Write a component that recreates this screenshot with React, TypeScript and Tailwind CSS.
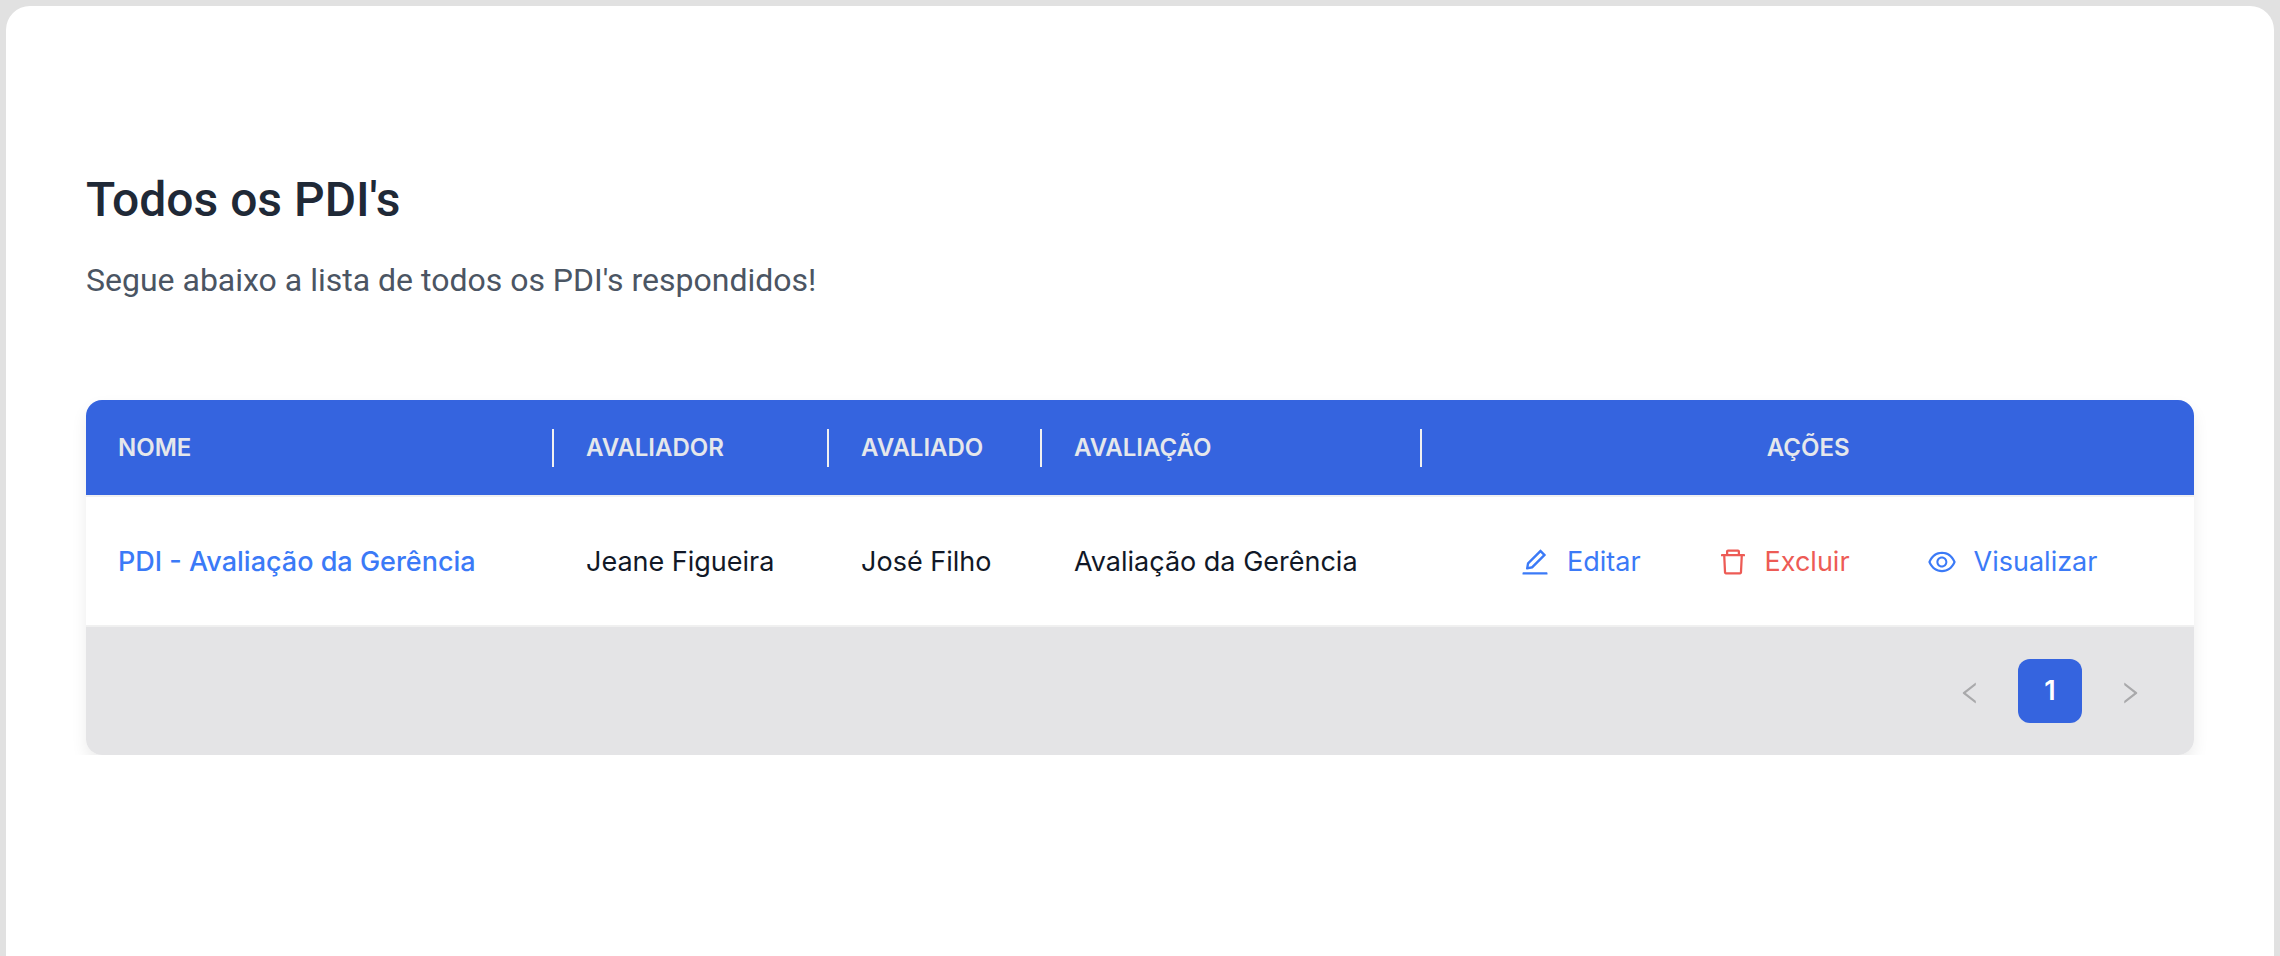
import { AiOutlineDelete, AiOutlineEdit, AiOutlineEye, AiOutlineLeft, AiOutlineRight } from 'react-icons/ai';

type Pdi = {
  id: number;
  nome: string;
  avaliador: string;
  avaliado: string;
  avaliacao: string;
};

const pdis: Pdi[] = [
  {
    id: 1,
    nome: 'PDI - Avaliação da Gerência',
    avaliador: 'Jeane Figueira',
    avaliado: 'José Filho',
    avaliacao: 'Avaliação da Gerência',
  },
];

const columns = [
  { title: 'Nome', width: 'w-[22.2%]' },
  { title: 'Avaliador', width: 'w-[13.05%]' },
  { title: 'Avaliado', width: 'w-[10.1%]' },
  { title: 'Avaliação', width: 'w-[18.05%]' },
];

const actions = [
  { label: 'Editar', icon: AiOutlineEdit, color: 'text-[#3b7af7]' },
  { label: 'Excluir', icon: AiOutlineDelete, color: 'text-[#ed5b55]' },
  { label: 'Visualizar', icon: AiOutlineEye, color: 'text-[#3b7af7]' },
];

const PdiTable = () => (
  <table className="w-full table-fixed text-left">
    <thead>
      <tr className="h-24 border-b-2 border-[#f0f0f0] bg-[#3564df] text-2xl uppercase text-[#e5e7eb]">
        {columns.map((col) => (
          <th key={col.title} className={`p-0 font-semibold ${col.width}`}>
            <div className="flex h-[38px] items-center border-r-2 border-[#f0f0f0] pl-8">{col.title}</div>
          </th>
        ))}
        <th className="p-0 text-center font-semibold">Ações</th>
      </tr>
    </thead>
    <tbody>
      {pdis.map((pdi) => (
        <tr key={pdi.id} className="h-[130px] border-b-2 border-[#f0f0f0] text-[27px] text-[#111827]">
          <td className="whitespace-nowrap pl-8 pt-0.5">
            <a href="#pdi" className="font-medium text-[#3b7af7]">{pdi.nome}</a>
          </td>
          <td className="whitespace-nowrap pl-8 pt-0.5">{pdi.avaliador}</td>
          <td className="whitespace-nowrap pl-8 pt-0.5">{pdi.avaliado}</td>
          <td className="whitespace-nowrap pl-8 pt-0.5">{pdi.avaliacao}</td>
          <td className="pt-0.5">
            <div className="flex items-center justify-center gap-[76px]">
              {actions.map(({ label, icon: Icon, color }) => (
                <button key={label} type="button" className={`flex cursor-pointer items-center gap-4 ${color}`}>
                  <Icon className="size-8" />
                  {label}
                </button>
              ))}
            </div>
          </td>
        </tr>
      ))}
    </tbody>
  </table>
);

const Pagination = () => (
  <nav aria-label="Paginação" className="flex h-32 items-center justify-end gap-4 bg-[#e4e4e6] px-8">
    <button type="button" disabled aria-label="Página anterior" className="flex size-16 items-center justify-center pt-1 text-[#a9a9ab]">
      <AiOutlineLeft className="size-7" />
    </button>
    <button type="button" aria-current="page" className="size-16 rounded-xl bg-[#3564df] text-[27px] font-semibold text-white">
      1
    </button>
    <button type="button" disabled aria-label="Próxima página" className="flex size-16 items-center justify-center pt-1 text-[#a9a9ab]">
      <AiOutlineRight className="size-7" />
    </button>
  </nav>
);

const App = () => (
  <div className="flex min-h-screen flex-col bg-[#e1e1e1] px-1.5 pt-1.5">
    <main className="flex-1 rounded-t-3xl bg-white px-20 pt-[162px] font-['Roboto',sans-serif]">
      <h1 className="text-5xl font-medium leading-[64px] text-[#1f2937]">Todos os PDI's</h1>
      <p className="mt-6 text-[32px] leading-[48px] text-[#4b5563]">Segue abaixo a lista de todos os PDI's respondidos!</p>
      {/* the outer box cuts the shadow off at the bottom of the table */}
      <section className="-mx-8 mt-16 overflow-hidden px-8 pt-8 font-['Inter',sans-serif]">
        <div className="overflow-hidden rounded-2xl shadow-[0_8px_16px_rgba(0,0,0,0.08)]">
          <PdiTable />
          <Pagination />
        </div>
      </section>
    </main>
  </div>
);

export default App;
